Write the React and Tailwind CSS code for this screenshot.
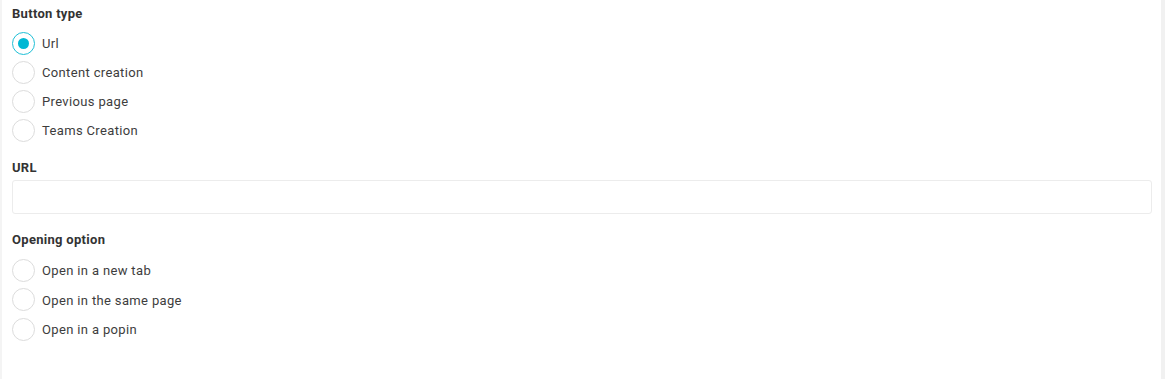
import { useState } from 'react'

// Formulario de botón: tipo de botón, URL y opción de apertura.
const tipos = ['Url', 'Content creation', 'Previous page', 'Teams Creation']
const aperturas = ['Open in a new tab', 'Open in the same page', 'Open in a popin']

function Radio({ label, checked, onClick, alto }) {
  return (
    <label onClick={onClick} className={`flex items-center gap-[7px] cursor-pointer ${alto}`}>
      <span
        className={`w-[23px] h-[23px] rounded-full border flex items-center justify-center bg-white ${
          checked ? 'border-[#1ebfd6]' : 'border-[#dcdcdc]'
        }`}
      >
        {checked && <span className="w-[11px] h-[11px] rounded-full bg-[#00b8d4]" />}
      </span>
      <span className="pt-[1px] text-[13px] text-[#3d3d3d] tracking-[0.35px]">{label}</span>
    </label>
  )
}

export default function App() {
  const [tipo, setTipo] = useState('Url')
  const [apertura, setApertura] = useState(null)
  const [url, setUrl] = useState('')

  return (
    <div className="flex w-[1165px] h-[379px] bg-white" style={{ fontFamily: 'Roboto, "Open Sans", sans-serif' }}>
      <div className="w-[2px] bg-[#f4f4f4]" />
      <div className="flex-1 pl-[10px] pr-[9px] pt-[6px]">
        <h3 className="text-[13px] leading-[16px] font-bold text-[#333] tracking-[0.3px]">Button type</h3>
        <div className="mt-[6.5px]">
          {tipos.map(t => (
            <Radio key={t} label={t} checked={tipo === t} onClick={() => setTipo(t)} alto="h-[29px]" />
          ))}
        </div>

        <h3 className="mt-[15.5px] text-[13px] leading-[16px] font-bold text-[#333] tracking-[0.3px]">URL</h3>
        <input
          value={url}
          onChange={e => setUrl(e.target.value)}
          className="mt-[4px] block w-full h-[34px] rounded-[3px] border border-[#ececec] px-2 text-[13px] outline-none"
        />

        <h3 className="mt-[18px] text-[13px] leading-[16px] font-bold text-[#333] tracking-[0.3px]">Opening option</h3>
        <div className="mt-[7.5px]">
          {aperturas.map(a => (
            <Radio key={a} label={a} checked={apertura === a} onClick={() => setApertura(a)} alto="h-[29.5px]" />
          ))}
        </div>
      </div>
      <div className="w-[4px] bg-[#f1f1f1]" />
    </div>
  )
}
